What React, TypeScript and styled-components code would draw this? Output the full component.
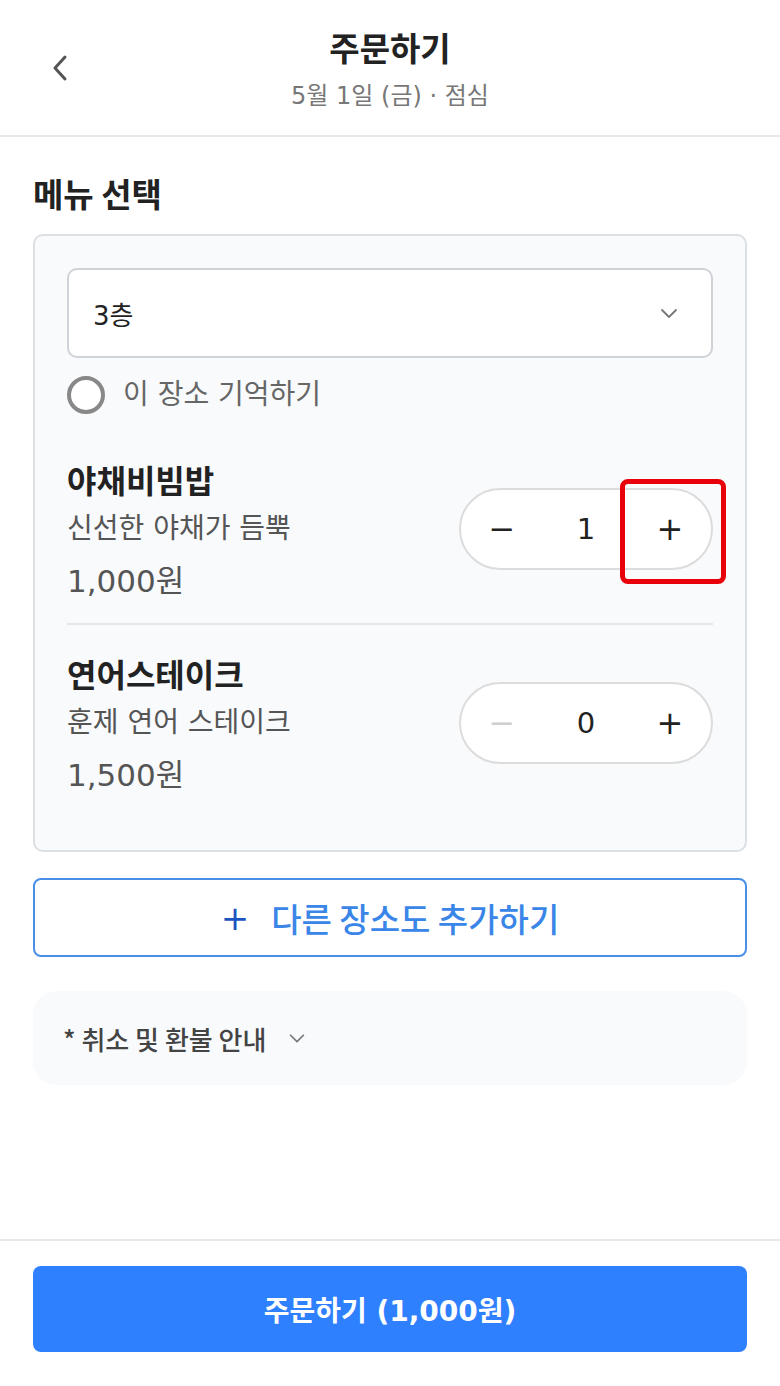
import { useState } from "react";
import styled, { createGlobalStyle } from "styled-components";

const GlobalStyle = createGlobalStyle`
  *, *::before, *::after {
    box-sizing: border-box;
  }
  body {
    margin: 0;
    background: #ffffff;
    font-family: "DejaVu Sans", "Noto Sans CJK KR", sans-serif;
  }
`;

const menus = [
  { id: 1, name: "야채비빔밥", desc: "신선한 야채가 듬뿍", price: 1000 },
  { id: 2, name: "연어스테이크", desc: "훈제 연어 스테이크", price: 1500 },
];

const won = (n: number) => n.toLocaleString("ko-KR") + "원";

const Chevron = ({ size = 20, color = "#666" }: { size?: number; color?: string }) => (
  <svg width={size} height={size} viewBox="0 0 24 24" fill="none" stroke={color} strokeWidth="1.8" strokeLinecap="round" strokeLinejoin="round">
    <path d="M5 9l7 7 7-7" />
  </svg>
);

const App = () => {
  const [counts, setCounts] = useState<Record<number, number>>({ 1: 1, 2: 0 });
  const [remember, setRemember] = useState(false);

  const total = menus.reduce((sum, m) => sum + m.price * (counts[m.id] || 0), 0);

  const change = (id: number, d: number) =>
    setCounts((c) => ({ ...c, [id]: Math.max(0, (c[id] || 0) + d) }));

  return (
    <Page>
      <GlobalStyle />
      <Header>
        <BackButton aria-label="뒤로">
          <svg width="20" height="28" viewBox="0 0 20 28" fill="none" stroke="#555" strokeWidth="3" strokeLinecap="round" strokeLinejoin="round">
            <path d="M15 3L5 14l10 11" />
          </svg>
        </BackButton>
        <Title>주문하기</Title>
        <SubTitle>5월 1일 (금) · 점심</SubTitle>
      </Header>

      <Main>
        <SectionTitle>메뉴 선택</SectionTitle>
        <Card>
          <Select>
            <span>3층</span>
            <Chevron size={24} color="#777" />
          </Select>
          <RadioRow onClick={() => setRemember(!remember)}>
            <Radio $checked={remember} />
            <RadioLabel>이 장소 기억하기</RadioLabel>
          </RadioRow>

          {menus.map((m, i) => (
            <MenuItem key={m.id} $first={i === 0} $last={i === menus.length - 1}>
              <MenuInfo>
                <MenuName>{m.name}</MenuName>
                <MenuDesc>{m.desc}</MenuDesc>
                <MenuPrice>{won(m.price)}</MenuPrice>
              </MenuInfo>
              <Stepper>
                <StepButton $disabled={counts[m.id] === 0} onClick={() => change(m.id, -1)}>
                  −
                </StepButton>
                <Count>{counts[m.id]}</Count>
                <StepButton onClick={() => change(m.id, 1)}>+</StepButton>
                {i === 0 && <Highlight />}
              </Stepper>
            </MenuItem>
          ))}
        </Card>

        <AddButton>
          <AddPlus>+</AddPlus>
          <span>다른 장소도 추가하기</span>
        </AddButton>

        <Notice>
          <NoticeText>* 취소 및 환불 안내</NoticeText>
          <Chevron size={22} color="#777" />
        </Notice>
      </Main>

      <Footer>
        <OrderButton>주문하기 ({won(total)})</OrderButton>
      </Footer>
    </Page>
  );
};

export default App;

const Page = styled.div`
  width: 780px;
  min-height: 1386px;
  display: flex;
  flex-direction: column;
`;

const Header = styled.header`
  position: relative;
  height: 137px;
  border-bottom: 2px solid #e8e8e8;
  display: flex;
  flex-direction: column;
  align-items: center;
  padding-top: 24px;
`;

const BackButton = styled.button`
  position: absolute;
  left: 50px;
  top: 54px;
  background: none;
  border: none;
  padding: 0;
  cursor: pointer;
`;

const Title = styled.h1`
  margin: 0;
  font-family: "Noto Sans CJK KR", sans-serif;
  font-size: 33px;
  line-height: 46px;
  font-weight: 700;
  color: #222;
`;

const SubTitle = styled.div`
  margin-top: 9px;
  font-size: 24px;
  line-height: 34px;
  color: #777;
`;

const Main = styled.main`
  flex: 1;
  padding: 0 33px;
`;

const SectionTitle = styled.h2`
  margin: 33px 0 18px;
  font-family: "Noto Sans CJK KR", sans-serif;
  font-size: 33px;
  line-height: 46px;
  font-weight: 700;
  color: #222;
`;

const Card = styled.section`
  border: 2px solid #dcdfe3;
  border-radius: 10px;
  background: #f8fafc;
  padding: 32px 32px 34px;
`;

const Select = styled.div`
  height: 90px;
  background: #fff;
  border: 2px solid #cfd2d6;
  border-radius: 10px;
  display: flex;
  align-items: center;
  justify-content: space-between;
  padding: 0 30px 0 24px;
  font-size: 26px;
  color: #222;
`;

const RadioRow = styled.label`
  display: flex;
  align-items: center;
  gap: 18px;
  margin-top: 18px;
  cursor: pointer;
`;

const Radio = styled.span<{ $checked?: boolean }>`
  width: 38px;
  height: 38px;
  border-radius: 50%;
  border: 4px solid ${(p) => (p.$checked ? "#2f80ff" : "#888")};
  background: #fff;
`;

const RadioLabel = styled.span`
  font-size: 28px;
  line-height: 38px;
  color: #666;
`;

const MenuItem = styled.div<{ $first?: boolean; $last?: boolean }>`
  display: flex;
  align-items: center;
  justify-content: space-between;
  padding-top: ${(p) => (p.$first ? "43px" : "26px")};
  padding-bottom: ${(p) => (p.$last ? "21px" : "22px")};
  border-bottom: ${(p) => (p.$last ? "none" : "2px solid #e4e6ea")};
`;

const MenuInfo = styled.div`
  display: flex;
  flex-direction: column;
`;

const MenuName = styled.div`
  font-family: "Noto Sans CJK KR", sans-serif;
  font-size: 32px;
  line-height: 44px;
  font-weight: 700;
  color: #222;
`;

const MenuDesc = styled.div`
  margin-top: 8px;
  font-size: 28px;
  line-height: 40px;
  color: #555;
`;

const MenuPrice = styled.div`
  margin-top: 12px;
  font-size: 31px;
  line-height: 40px;
  color: #555;
`;

const Stepper = styled.div`
  position: relative;
  width: 254px;
  height: 82px;
  border: 2px solid #dcdcdc;
  border-radius: 41px;
  background: #fff;
  display: flex;
  align-items: center;
  justify-content: space-between;
  padding: 0 11px;
`;

const StepButton = styled.button<{ $disabled?: boolean }>`
  width: 60px;
  height: 60px;
  border: none;
  background: none;
  padding: 0;
  font-family: "DejaVu Sans", sans-serif;
  font-size: 32px;
  color: ${(p) => (p.$disabled ? "#cfcfcf" : "#222")};
  cursor: pointer;
`;

const Count = styled.span`
  font-size: 29px;
  color: #222;
`;

const Highlight = styled.span`
  position: absolute;
  left: 159px;
  top: -11px;
  width: 106px;
  height: 105px;
  border: 5px solid #e8000b;
  border-radius: 8px;
  pointer-events: none;
`;

const AddButton = styled.button`
  margin-top: 26px;
  width: 100%;
  height: 79px;
  border: 2px solid #4a8fe7;
  border-radius: 8px;
  background: #fff;
  display: flex;
  align-items: center;
  justify-content: center;
  gap: 22px;
  font-family: "Noto Sans CJK KR", sans-serif;
  font-size: 33px;
  font-weight: 500;
  color: #3a86e8;
  cursor: pointer;
`;

const AddPlus = styled.span`
  font-family: "DejaVu Sans", sans-serif;
  font-weight: 400;
  font-size: 34px;
  color: #1c55c0;
`;

const Notice = styled.div`
  margin-top: 34px;
  height: 94px;
  border-radius: 24px;
  background: #f8fafc;
  display: flex;
  align-items: center;
  gap: 20px;
  padding: 0 30px;
`;

const NoticeText = styled.span`
  font-family: "Noto Sans CJK KR", sans-serif;
  font-size: 26px;
  font-weight: 500;
  color: #444;
`;

const Footer = styled.footer`
  margin-top: auto;
  border-top: 2px solid #e8e8e8;
  padding: 25px 33px 34px;
`;

const OrderButton = styled.button`
  width: 100%;
  height: 86px;
  border: none;
  border-radius: 8px;
  background: #2f80ff;
  color: #fff;
  font-family: "DejaVu Sans", "Noto Sans CJK KR", sans-serif;
  font-size: 28px;
  font-weight: 700;
  cursor: pointer;
`;
